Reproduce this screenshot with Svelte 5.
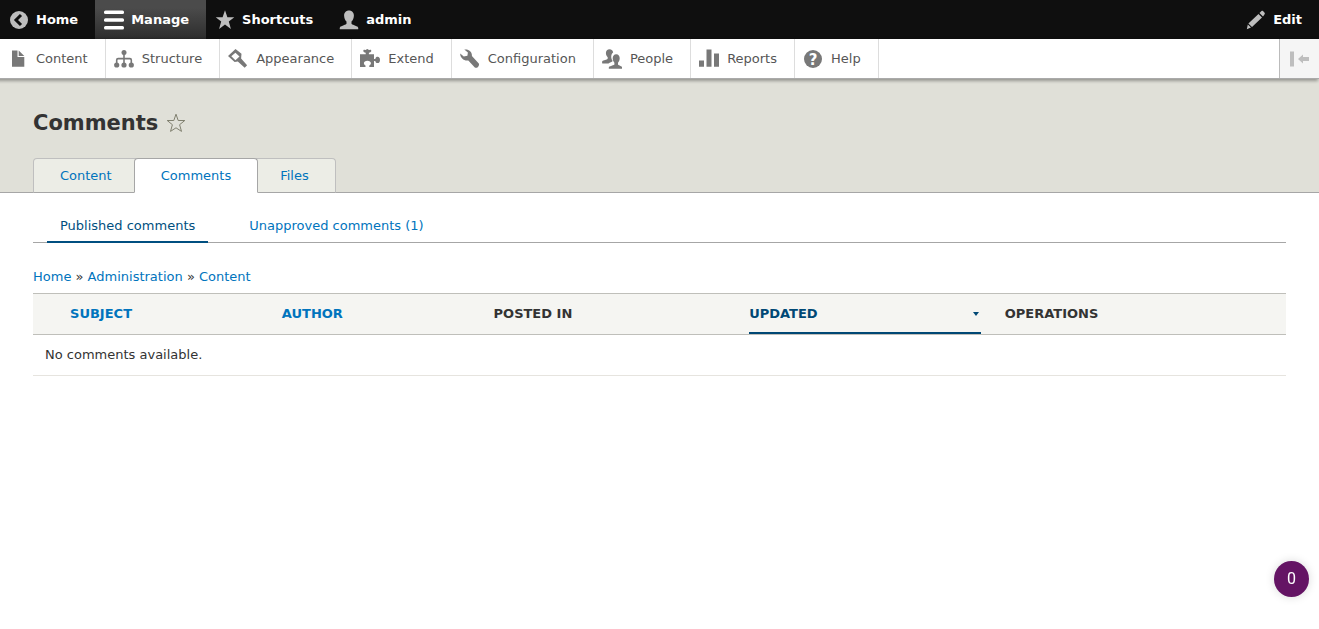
<script lang="ts">
    const bar = [
        { label: "Home", icon: "back" },
        { label: "Manage", icon: "menu", active: true },
        { label: "Shortcuts", icon: "star" },
        { label: "admin", icon: "user" }
    ];

    const tray = [
        { label: "Content", icon: "file" },
        { label: "Structure", icon: "orgchart" },
        { label: "Appearance", icon: "brush" },
        { label: "Extend", icon: "puzzle" },
        { label: "Configuration", icon: "wrench" },
        { label: "People", icon: "people" },
        { label: "Reports", icon: "bars" },
        { label: "Help", icon: "help" }
    ];

    const tabs = ["Content", "Comments", "Files"];
    const subtabs = ["Published comments", "Unapproved comments (1)"];
    const crumbs = ["Home", "Administration", "Content"];

    let activeTab = $state("Comments");
    let activeSubtab = $state("Published comments");
</script>

{#snippet icon(name)}
    <svg class="icon" viewBox="0 0 20 20" aria-hidden="true">
        {#if name === "back"}
            <circle cx="10" cy="10" r="9"/>
            <path class="cut" d="M12 5L7 10l5 5"/>
        {:else if name === "menu"}
            <rect width="20" height="3.4" y="0.6" rx="1.5"/>
            <rect width="20" height="3.4" y="8.3" rx="1.5"/>
            <rect width="20" height="3.4" y="16" rx="1.5"/>
        {:else if name === "star"}
            <path d="M10 .3l2.4 6.9h6.9l-5.500 4.300 2.100 7.400L10 14.600l-5.900 4.300 2.100-7.400L.7 7.200h6.900z"/>
        {:else if name === "user"}
            <path d="M10 .4c3 0 4.900 2.200 4.900 5.200 0 2.600-1 4.700-2.400 6v2.200c0 1 5.200 1.900 6.500 3.400.4.500.3 1.200.2 2.100H.8c-.1-.9-.2-1.600.2-2.100 1.300-1.500 6.500-2.400 6.500-3.400v-2.200c-1.400-1.300-2.400-3.400-2.400-6C5.100 2.600 7 .4 10 .4z"/>
        {:else if name === "pencil"}
            <path d="M12.500 4L16 7.500 6 17 2.400 13.500zM13.500 3l2-1.900c.5-.4 1-.4 1.500 0l1.600 1.600c.4.500.4 1 0 1.500L17 6.400zM1.800 14.600l3.200 3L.8 19.200z"/>
        {:else if name === "file"}
            <path d="M4 1.400h5.500v6.500h6.800v9.900H4zM10.700 1.400l5.600 5.500h-5.600z"/>
        {:else if name === "orgchart"}
            <circle cx="10" cy="3.500" r="2.500"/>
            <circle cx="2.700" cy="16" r="2.600"/>
            <circle cx="10" cy="16" r="2.600"/>
            <circle cx="17.300" cy="16" r="2.600"/>
            <path class="line" d="M10 4v12M2.700 15v-4q0-1.400 1.400-1.400h11.800q1.400 0 1.400 1.400v4"/>
        {:else if name === "brush"}
            <path fill-rule="evenodd" d="M7.500 0l6 4.800-.4 4.600 6 6.800-2.400 2.600-6.900-6.400-3.200.6L0 7zM7.400 3.800L3.300 7.300l4.100 3.900 4.100-3.700z"/>
        {:else if name === "puzzle"}
            <path d="M0 5.300h5.700V3.700c-1.600-.2-2.400-1-2.400-1.900 0-.8.700-1.500 1.800-.9 1.100.5 1.200-.8 2.200-.8s1.100 1.300 2.200.8c1.100-.6 1.800.1 1.800.9 0 .9-.8 1.700-2.400 1.900v1.600H14v4.600h1.300c.3-1.500 1.100-2.100 2.400-2.100 1.400 0 2.300 1.300 2.300 3.100s-.9 3.200-2.300 3.200c-1.300 0-2.100-.7-2.400-2.200H14v6.200H9.300v-1.600c1.300-.6 1.600-1.500 1.600-2.400 0-1.500-1.400-2.400-3.500-2.400s-3.500.9-3.500 2.400c0 .9.300 1.800 1.600 2.400v1.600H0z"/>
        {:else if name === "wrench"}
            <path d="M4.300.6c4.100-.9 8.100 2.100 7.600 6.500l6.900 7.300c.5 1.200.2 2.400-.8 3.500-1 .9-2.100 1.200-3.200.6L8.300 11.400C4 12.200 0 8.800.2 4.400l3.600 3.200 3.600-.9.500-3.100z"/>
        {:else if name === "people"}
            <path d="M7.600.3c2 0 3.300 1.300 3.500 3.100-1.600 1.200-2.200 3.400-1.700 5.900.2 1.100.7 2 1.300 2.700-.8 1.200-2.800 1.400-4.200 2.500H.3c-.4-1.300-.3-2.200.5-2.700 1.800-.8 4.900-1.200 4.900-2.200V8.200C4.500 7.100 3.900 5.500 3.900 4 3.900 1.800 5.400.3 7.600.3z"/>
            <path d="M14.200 5.300c2.300 0 3.500 1.700 3.500 4 0 1.800-.7 3.500-1.700 4.400v1.700c0 .9 3.100 1.300 3.900 2.400.4.500.3 1.400.2 2H6.900c-.2-.8-.1-1.500.2-2 .9-1.100 5.300-1.500 5.300-2.400v-1.700c-1-.9-1.700-2.600-1.700-4.400 0-2.300 1.300-4 3.500-4z"/>
        {:else if name === "bars"}
            <path d="M0 11.500h5v6.300H0zM7.500.5h5v17.300h-5zM15 4.500h5v13.300h-5z"/>
        {:else if name === "help"}
            <circle cx="10" cy="10" r="9"/>
            <text x="10" y="15.500">?</text>
        {:else if name === "collapse"}
            <path d="M0 2.500h4v15H0zM8 10l5-4.500v2.500h6v4h-6v2.500z"/>
        {/if}
    </svg>
{/snippet}

<nav class="bar" aria-label="Toolbar">
    {#each bar as item (item.label)}
        <a href="#{item.icon}" class:active={item.active}>{@render icon(item.icon)}{item.label}</a>
    {/each}
    <button class="edit" type="button">{@render icon("pencil")}Edit</button>
</nav>

<nav class="tray" aria-label="Administration menu">
    {#each tray as item (item.label)}
        <a href="#{item.icon}">{@render icon(item.icon)}{item.label}</a>
    {/each}
    <button class="orientation" type="button" aria-label="Vertical orientation">{@render icon("collapse")}</button>
</nav>

<header>
    <div class="title">
        <h1>Comments</h1>
        <button class="favorite" type="button" aria-label="Add to shortcuts">
            <svg viewBox="0 0 20 20" aria-hidden="true">
                <path d="M10 1.200l2.200 6.300h6.600l-5.200 4.200 1.900 6.700-5.500-3.600-5.500 3.600 1.900-6.700L1.200 7.500h6.600z"/>
            </svg>
        </button>
    </div>
    <nav class="tabs" aria-label="Primary tabs">
        {#each tabs as tab (tab)}
            <a href="#{tab}" class:active={tab === activeTab} onclick={() => activeTab = tab}>{tab}</a>
        {/each}
    </nav>
</header>

<main>
    <nav class="subtabs" aria-label="Secondary tabs">
        {#each subtabs as tab (tab)}
            <a href="#{tab}" class:active={tab === activeSubtab} onclick={() => activeSubtab = tab}>{tab}</a>
        {/each}
    </nav>

    <nav class="breadcrumb" aria-label="Breadcrumb">
        {#each crumbs as crumb, i (crumb)}
            {#if i > 0}{" » "}{/if}<a href="#{crumb}">{crumb}</a>
        {/each}
    </nav>

    <table>
        <colgroup>
            <col class="select"><col class="subject"><col class="author">
            <col class="posted"><col class="updated"><col>
        </colgroup>
        <thead>
            <tr>
                <td></td>
                <th><a href="#subject">Subject</a></th>
                <th><a href="#author">Author</a></th>
                <th>Posted in</th>
                <th aria-sort="descending"><a class="sorted" href="#updated">Updated<span class="arrow"></span></a></th>
                <th>Operations</th>
            </tr>
        </thead>
        <tbody>
            <tr>
                <td colspan="6">No comments available.</td>
            </tr>
        </tbody>
    </table>
</main>

<button class="counter" type="button">0</button>

<style>
    :global(body) {
        background: #fff;
        color: #333;
        font-family: "DejaVu Sans", sans-serif;
        font-size: 13px;
        line-height: 20px;
    }

    a {
        color: #0074bd;
        text-decoration: none;
    }

    button {
        border: 0;
        padding: 0;
        background: none;
        font: inherit;
        cursor: pointer;
    }

    .bar, .tray {
        display: flex;
        height: 39px;
    }

    .bar {
        background: #0f0f0f;
    }

    .bar a, .bar button, .tray a {
        display: flex;
        align-items: center;
        gap: 7px;
        padding: 0 17px 0 9px;
    }

    .bar a, .bar button {
        color: #fff;
        font-weight: bold;
    }

    .bar .active {
        background: linear-gradient(#4b4b4b 20%, #2d2d2d);
    }

    .bar .edit {
        margin-left: auto;
    }

    .icon {
        flex: none;
        width: 20px;
        height: 20px;
        fill: #bebebe;
    }

    .active .icon {
        fill: #fff;
    }

    .cut {
        fill: none;
        stroke: #0f0f0f;
        stroke-width: 3;
    }

    .tray {
        position: relative;
        background: #fff;
        border-bottom: 1px solid #aaa;
        box-shadow: -2px 1px 3px 1px rgba(0, 0, 0, 0.33);
    }

    .tray a {
        gap: 8px;
        padding-left: 8px;
        border-right: 1px solid #ddd;
        color: #565656;
    }

    .tray a .icon {
        fill: #787878;
    }

    .line {
        fill: none;
        stroke: #787878;
        stroke-width: 1.6;
    }

    .icon text {
        fill: #fff;
        font-size: 15px;
        font-weight: bold;
        text-anchor: middle;
    }

    .orientation {
        display: flex;
        align-items: center;
        justify-content: center;
        width: 40px;
        margin-left: auto;
        border-left: 1px solid #bbb;
        background: #f5f5f5;
    }

    header {
        padding: 31px 33px 0;
        background: #e0e0d8;
        border-bottom: 1px solid #a6a6a6;
    }

    .title {
        display: flex;
        align-items: center;
        gap: 8px;
        margin-bottom: 22px;
    }

    h1 {
        margin: 0;
        font-size: 21px;
        line-height: 26px;
    }

    .favorite svg {
        display: block;
        width: 20px;
        height: 20px;
        fill: none;
        stroke: #80806f;
    }

    .tabs {
        display: flex;
        margin-bottom: -1px;
    }

    .tabs a {
        padding: 0 26px;
        border: 1px solid #bfbfbf;
        border-bottom-color: #a6a6a6;
        border-radius: 4px 4px 0 0;
        background: #ecede6;
        line-height: 33px;
    }

    .tabs a + a {
        margin-left: -5px;
    }

    .tabs .active {
        z-index: 1;
        border-color: #a6a6a6;
        border-bottom-color: #fff;
        background: #fff;
    }

    main {
        padding: 16px 33px;
    }

    .subtabs {
        display: flex;
        gap: 28px;
        padding-left: 14px;
        border-bottom: 1px solid #a6a6a6;
    }

    .subtabs a {
        margin-bottom: -1px;
        padding: 1px 13px 0;
        border-bottom: 2px solid transparent;
        line-height: 31px;
    }

    .subtabs .active {
        border-color: #004f80;
        color: #004f80;
    }

    .breadcrumb {
        margin: 24px 0 6px;
    }

    table {
        width: 100%;
        border-collapse: separate;
        border-spacing: 0;
        table-layout: fixed;
    }

    .select {
        width: 2%;
    }

    .subject, .author {
        width: 16.9%;
    }

    .posted, .updated {
        width: 20.4%;
    }

    thead td, th {
        padding: 0 12px;
        border: solid #bfbfba;
        border-width: 1px 0;
        background: #f5f5f2;
        line-height: 40px;
        text-align: left;
        text-transform: uppercase;
    }

    thead td {
        padding: 0;
    }

    .sorted {
        display: flex;
        align-items: center;
        justify-content: space-between;
        box-shadow: inset 0 -2px #004875;
        color: #004875;
    }

    .arrow {
        margin-right: 2px;
        border: 3px solid transparent;
        border-top: 4px solid #004875;
        border-bottom: 0;
    }

    tbody td {
        padding: 10px 12px;
        border-bottom: 1px solid #e6e4df;
    }

    .counter {
        position: fixed;
        right: 10px;
        bottom: 32px;
        width: 35px;
        height: 36px;
        border-radius: 50%;
        background: #641464;
        box-shadow: 0 0 10px rgba(0, 0, 0, 0.15);
        color: #fff;
        font-family: Roboto, sans-serif;
        font-size: 16px;
    }
</style>
